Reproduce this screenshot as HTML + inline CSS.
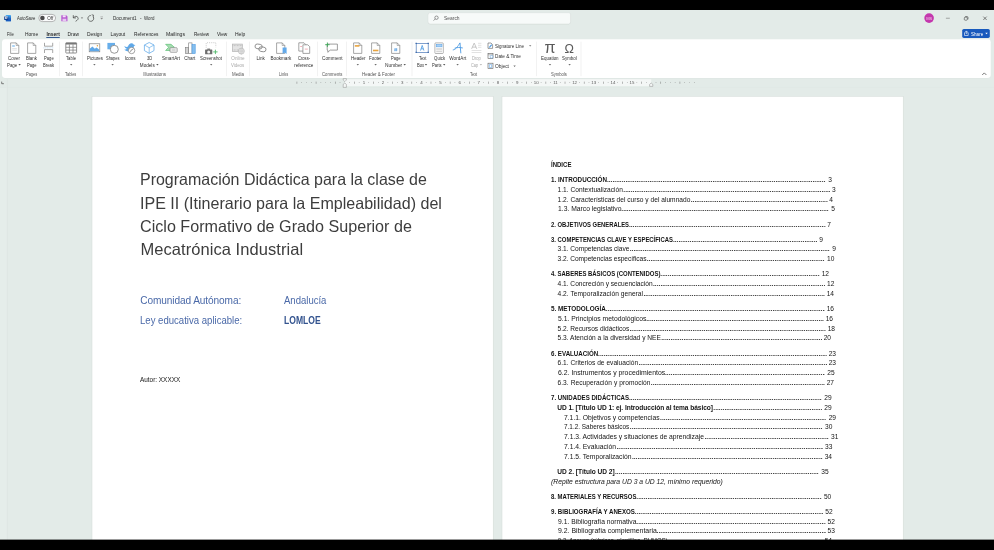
<!DOCTYPE html>
<html lang="es"><head><meta charset="utf-8"><title>Document1 - Word</title>
<style>
html,body{margin:0;padding:0;background:#000;}
body{width:994px;height:550px;position:relative;overflow:hidden;font-family:"Liberation Sans", sans-serif;}
.t{position:absolute;white-space:pre;display:block;transform-origin:0 0;}
.a{position:absolute;}
svg{position:absolute;overflow:visible;}
svg.f{left:0;top:0;}
#w{position:absolute;left:0;top:0;width:994px;height:550px;overflow:hidden;will-change:transform;}
</style></head><body>
<div id="w">
<svg class="f" width="994" height="550" viewBox="0 0 994 550"><rect x="0" y="10" width="994" height="530" rx="0" fill="#e3ebe8"/></svg>
<svg class="f" width="994" height="550" viewBox="0 0 994 550"><rect x="92" y="96.3" width="401.2" height="450" rx="0" fill="#fff" stroke="#d2d9d6" stroke-width="0.5"/></svg>
<svg class="f" width="994" height="550" viewBox="0 0 994 550"><rect x="502" y="96.3" width="401.2" height="450" rx="0" fill="#fff" stroke="#d2d9d6" stroke-width="0.5"/></svg>
<svg class="f" width="994" height="550" viewBox="0 0 994 550"><rect x="0" y="87.2" width="7.0" height="460" rx="0" fill="#e5edea"/></svg>
<svg class="f" width="994" height="550" viewBox="0 0 994 550"><rect x="6.9" y="79" width="0.6" height="468" rx="0" fill="#dbe3e0"/></svg>
<svg class="f" width="994" height="550" viewBox="0 0 994 550"><rect x="0" y="86.9" width="994" height="0.5" rx="0" fill="#dfe7e4"/></svg>
<svg class="f" width="994" height="550" viewBox="0 0 994 550"><g transform="translate(1.2 81.4)"><path d="M0.5 0.2 V2.3 H2.7" fill="none" stroke="#555" stroke-width="0.75"/></g></svg>
<svg class="f" width="994" height="550" viewBox="0 0 994 550"><g transform="translate(4.2 14.9)"><rect x="1.6" y="0" width="5.2" height="6.4" rx="0.7" fill="#41a5ee"/><rect x="1.6" y="3.2" width="5.2" height="3.2" fill="#185abd"/><rect x="1.6" y="1.6" width="5.2" height="1.6" fill="#2b7cd3"/><rect x="0" y="1.4" width="4" height="3.8" rx="0.5" fill="#103f91"/><text x="2" y="4.4" font-size="3" font-weight="700" fill="#fff" text-anchor="middle" font-family="Liberation Sans, sans-serif">W</text></g></svg>
<span class="t" id="t0" style="left:17.30px;top:17.00px;font-size:4.6px;line-height:4.6px;color:#2b2b2b;transform:scaleX(0.9186);">AutoSave</span>
<svg class="f" width="994" height="550" viewBox="0 0 994 550"><rect x="38.8" y="14.4" width="16.8" height="7.2" rx="3.6" fill="#fbfcfc" stroke="#8a8a8a" stroke-width="0.6"/></svg>
<svg class="f" width="994" height="550" viewBox="0 0 994 550"><rect x="40.1" y="15.7" width="4.6" height="4.6" rx="2.3" fill="#4a4a4a"/></svg>
<span class="t" id="t1" style="left:47.20px;top:17.00px;font-size:4.6px;line-height:4.6px;color:#333;letter-spacing:-0.016px;">Off</span>
<svg class="f" width="994" height="550" viewBox="0 0 994 550"><g transform="translate(61 15)"><path d="M0.3 0.3 H5.2 L6.5 1.6 V6.3 H0.3 Z" fill="#b75ad0"/><rect x="1.7" y="0.3" width="3.0" height="2.0" fill="#f3e3f8"/><rect x="1.5" y="3.7" width="3.8" height="2.6" fill="#e6c8f0"/></g></svg>
<svg class="f" width="994" height="550" viewBox="0 0 994 550"><g transform="translate(72.4 14.6)"><path d="M0.9 0.6 V3.3 H3.6" fill="none" stroke="#444" stroke-width="0.75"/><path d="M1.1 3.2 C2.2 1.4 4.6 1.2 5.5 2.8 C6.3 4.3 5.2 5.6 3.2 6.7" fill="none" stroke="#444" stroke-width="0.75"/></g></svg>
<svg class="f" width="994" height="550" viewBox="0 0 994 550"><g transform="translate(80.8 17.4)"><path d="M0 0 H2.4 L1.2 1.4 Z" fill="#666"/></g></svg>
<svg class="f" width="994" height="550" viewBox="0 0 994 550"><g transform="translate(87.2 14.6)"><path d="M3.6 0.9 A2.9 2.9 0 1 0 6.1 2.3" fill="none" stroke="#444" stroke-width="0.75"/><path d="M3.6 0.2 V2.2 H5.6" fill="none" stroke="#444" stroke-width="0" /><path d="M4.5 0.2 L6.3 0.5 L6.0 2.5" fill="none" stroke="#444" stroke-width="0.7"/></g></svg>
<svg class="f" width="994" height="550" viewBox="0 0 994 550"><g transform="translate(100.2 16.6)"><path d="M0.2 0.3 H2.8" stroke="#8a8a8a" stroke-width="0.55"/><path d="M0.2 1.3 H2.8 L1.5 2.8 Z" fill="#8a8a8a"/></g></svg>
<span class="t" id="t2" style="left:112.90px;top:17.00px;font-size:4.6px;line-height:4.6px;color:#2b2b2b;letter-spacing:0.033px;">Document1</span>
<span class="t" id="t3" style="left:139.93px;top:17.00px;font-size:4.6px;line-height:4.6px;color:#2b2b2b;">-</span>
<span class="t" id="t4" style="left:144.30px;top:17.00px;font-size:4.6px;line-height:4.6px;color:#2b2b2b;transform:scaleX(0.9628);">Word</span>
<svg class="f" width="994" height="550" viewBox="0 0 994 550"><rect x="428" y="13.0" width="142.6" height="11.3" rx="2" fill="#c9d2ce"/></svg>
<svg class="f" width="994" height="550" viewBox="0 0 994 550"><rect x="428" y="12.7" width="142.6" height="11.2" rx="2" fill="#f7faf9" stroke="#d3dbd8" stroke-width="0.4"/></svg>
<svg class="f" width="994" height="550" viewBox="0 0 994 550"><g transform="translate(433.2 15.6)"><circle cx="3.3" cy="2.1" r="1.7" fill="none" stroke="#555" stroke-width="0.6"/><path d="M2.1 3.3 L0.4 5" stroke="#555" stroke-width="0.6"/></g></svg>
<span class="t" id="t5" style="left:443.90px;top:17.00px;font-size:4.6px;line-height:4.6px;color:#555;transform:scaleX(1.0712);">Search</span>
<svg class="f" width="994" height="550" viewBox="0 0 994 550"><rect x="924.3" y="13.3" width="9.6" height="9.6" rx="4.8" fill="#c437ad"/></svg>
<span class="t" id="t6" style="left:926.13px;top:17.00px;font-size:4.1px;line-height:4.1px;color:#f0c6e6;">MS</span>
<svg class="f" width="994" height="550" viewBox="0 0 994 550"><rect x="945.9" y="17.85" width="3.9" height="0.55" rx="0" fill="#6a6a6a"/></svg>
<svg class="f" width="994" height="550" viewBox="0 0 994 550"><g transform="translate(964.0 16.2)"><rect x="0.3" y="1.0" width="3.0" height="3.0" rx="0.8" fill="none" stroke="#444" stroke-width="0.6"/><path d="M1.2 0.35 H3.1 Q4.0 0.35 4.0 1.3 V3.1" fill="none" stroke="#444" stroke-width="0.6"/></g></svg>
<svg class="f" width="994" height="550" viewBox="0 0 994 550"><g transform="translate(983.1 16.4)"><path d="M0.2 0.2 L3.6 3.6 M3.6 0.2 L0.2 3.6" stroke="#3a3a3a" stroke-width="0.6"/></g></svg>
<span class="t" id="t7" style="left:7.30px;top:33.00px;font-size:4.9px;line-height:4.9px;color:#262626;transform:scaleX(0.8491);">File</span>
<span class="t" id="t8" style="left:24.90px;top:33.00px;font-size:4.9px;line-height:4.9px;color:#262626;letter-spacing:0.063px;">Home</span>
<span class="t" id="t9" style="left:46.50px;top:33.00px;font-size:4.9px;line-height:4.9px;color:#262626;font-weight:700;letter-spacing:-0.005px;">Insert</span>
<span class="t" id="t10" style="left:67.40px;top:33.00px;font-size:4.9px;line-height:4.9px;color:#262626;letter-spacing:0.045px;">Draw</span>
<span class="t" id="t11" style="left:87.00px;top:33.00px;font-size:4.9px;line-height:4.9px;color:#262626;letter-spacing:0.011px;">Design</span>
<span class="t" id="t12" style="left:110.60px;top:33.00px;font-size:4.9px;line-height:4.9px;color:#262626;letter-spacing:-0.015px;">Layout</span>
<span class="t" id="t13" style="left:133.50px;top:33.00px;font-size:4.9px;line-height:4.9px;color:#262626;transform:scaleX(0.9794);">References</span>
<span class="t" id="t14" style="left:166.00px;top:33.00px;font-size:4.9px;line-height:4.9px;color:#262626;transform:scaleX(1.0583);">Mailings</span>
<span class="t" id="t15" style="left:193.60px;top:33.00px;font-size:4.9px;line-height:4.9px;color:#262626;transform:scaleX(0.9472);">Review</span>
<span class="t" id="t16" style="left:216.80px;top:33.00px;font-size:4.9px;line-height:4.9px;color:#262626;transform:scaleX(0.9795);">View</span>
<span class="t" id="t17" style="left:235.10px;top:33.00px;font-size:4.9px;line-height:4.9px;color:#262626;transform:scaleX(1.0236);">Help</span>
<svg class="f" width="994" height="550" viewBox="0 0 994 550"><rect x="46.1" y="37.05" width="13.8" height="0.95" rx="0.4" fill="#34588f"/></svg>
<svg class="f" width="994" height="550" viewBox="0 0 994 550"><rect x="962.2" y="28.9" width="27.6" height="9.0" rx="1.6" fill="#185abd"/></svg>
<svg class="f" width="994" height="550" viewBox="0 0 994 550"><g transform="translate(964.0 30.5)"><path d="M1.6 2.2 H0.5 V5 H4.2 V2.2 H3.2" fill="none" stroke="#fff" stroke-width="0.6"/><path d="M2.4 3.6 V0.6 M1.3 1.5 L2.4 0.4 L3.5 1.5" fill="none" stroke="#fff" stroke-width="0.6"/></g></svg>
<span class="t" id="t18" style="left:970.60px;top:32.00px;font-size:5.0px;line-height:5.0px;color:#fff;transform:scaleX(0.9143);">Share</span>
<svg class="f" width="994" height="550" viewBox="0 0 994 550"><g transform="translate(985.3 32.8)"><path d="M0 0 L1.25 1.4 L2.5 0 Z" fill="#fff"/></g></svg>
<svg class="f" width="994" height="550" viewBox="0 0 994 550"><rect x="2" y="39.4" width="988.8" height="38.9" rx="3" fill="rgba(0,0,0,0.05)"/></svg>
<svg class="f" width="994" height="550" viewBox="0 0 994 550"><rect x="2" y="39.3" width="988.8" height="38.6" rx="3" fill="#fff"/></svg>
<svg class="f" width="994" height="550" viewBox="0 0 994 550"><g transform="translate(10.2 42.5)"><path d="M0.4 0.4 H6.0 L8.6 3.0 V10.9 H0.4 Z" fill="#fff" stroke="#767676" stroke-width="0.64"/><path d="M6.0 0.4 V3.0 H8.6" fill="none" stroke="#767676" stroke-width="0.512"/><rect x="2" y="2.6" width="2.6" height="1.8" fill="#8cc2f0" opacity="0.8"/><path d="M2 6 H6.6 M2 7.6 H6.6" stroke="#c8c8c8" stroke-width="0.5"/></g></svg>
<span class="t" id="t19" style="left:8.15px;top:57.00px;font-size:4.6px;line-height:4.6px;color:#2f2f2f;transform:scaleX(0.9702);">Cover</span>
<span class="t" id="t20" style="left:7.20px;top:64.00px;font-size:4.6px;line-height:4.6px;color:#2f2f2f;transform:scaleX(0.9502);">Page</span>
<svg class="f" width="994" height="550" viewBox="0 0 994 550"><g transform="translate(18.400000000000002 64.05)"><path d="M0 0 H2.4 L1.2 1.35 Z" fill="#555"/></g></svg>
<svg class="f" width="994" height="550" viewBox="0 0 994 550"><g transform="translate(27.2 42.5)"><path d="M0.4 0.4 H6.0 L8.6 3.0 V10.9 H0.4 Z" fill="#fff" stroke="#767676" stroke-width="0.64"/><path d="M6.0 0.4 V3.0 H8.6" fill="none" stroke="#767676" stroke-width="0.512"/></g></svg>
<span class="t" id="t21" style="left:25.85px;top:57.00px;font-size:4.6px;line-height:4.6px;color:#2f2f2f;transform:scaleX(0.9478);">Blank</span>
<span class="t" id="t22" style="left:26.95px;top:64.00px;font-size:4.6px;line-height:4.6px;color:#2f2f2f;transform:scaleX(0.8850);">Page</span>
<svg class="f" width="994" height="550" viewBox="0 0 994 550"><g transform="translate(43.2 42.5)"><path d="M1.3 0.3 V3.7 H9.5 V0.3 M1.3 10.5 V7.1 H9.5 V10.5" fill="none" stroke="#767676" stroke-width="0.64"/><path d="M0.2 5.4 H10.6" stroke="#bcd9f1" stroke-width="0.8" stroke-dasharray="1.2 0.5"/></g></svg>
<span class="t" id="t23" style="left:43.75px;top:57.00px;font-size:4.6px;line-height:4.6px;color:#2f2f2f;transform:scaleX(0.9036);">Page</span>
<span class="t" id="t24" style="left:43.10px;top:64.00px;font-size:4.6px;line-height:4.6px;color:#2f2f2f;transform:scaleX(0.9155);">Break</span>
<span class="t" id="t25" style="left:25.75px;top:73.00px;font-size:4.6px;line-height:4.6px;color:#555;transform:scaleX(0.8671);">Pages</span>
<svg class="f" width="994" height="550" viewBox="0 0 994 550"><rect x="59.15" y="41.6" width="0.5" height="34.6" rx="0" fill="#e4e4e4"/></svg>
<svg class="f" width="994" height="550" viewBox="0 0 994 550"><g transform="translate(65.4 42.4)"><rect x="0.4" y="0.4" width="10.8" height="10.2" rx="0.5" fill="#fff" stroke="#777" stroke-width="0.8"/><rect x="0.4" y="0.4" width="10.8" height="1.7" fill="#777"/><path d="M4 2 V10.6 M7.6 2 V10.6 M0.4 4.9 H11.2 M0.4 7.7 H11.2" stroke="#7d7d7d" stroke-width="0.75"/></g></svg>
<span class="t" id="t26" style="left:66.40px;top:57.00px;font-size:4.6px;line-height:4.6px;color:#2f2f2f;transform:scaleX(0.9104);">Table</span>
<svg class="f" width="994" height="550" viewBox="0 0 994 550"><g transform="translate(70.0 64.05)"><path d="M0 0 H2.4 L1.2 1.35 Z" fill="#6e6e6e"/></g></svg>
<span class="t" id="t27" style="left:65.35px;top:73.00px;font-size:4.6px;line-height:4.6px;color:#555;transform:scaleX(0.8508);">Tables</span>
<svg class="f" width="994" height="550" viewBox="0 0 994 550"><rect x="82.15" y="41.6" width="0.5" height="34.6" rx="0" fill="#e4e4e4"/></svg>
<svg class="f" width="994" height="550" viewBox="0 0 994 550"><g transform="translate(88.8 43.4)"><rect x="0.4" y="0.4" width="10.6" height="8" fill="#fff" stroke="#767676" stroke-width="0.64"/><path d="M0.9 7.9 V5.4 L3.6 3 L6 5.4 L7.8 4.2 L10.5 6.4 V7.9 Z" fill="#5fa8e8"/><circle cx="8.6" cy="2.4" r="0.75" fill="#e8a33d"/></g></svg>
<span class="t" id="t28" style="left:86.50px;top:57.00px;font-size:4.6px;line-height:4.6px;color:#2f2f2f;transform:scaleX(0.9633);">Pictures</span>
<svg class="f" width="994" height="550" viewBox="0 0 994 550"><g transform="translate(93.2 64.05)"><path d="M0 0 H2.4 L1.2 1.35 Z" fill="#6e6e6e"/></g></svg>
<svg class="f" width="994" height="550" viewBox="0 0 994 550"><g transform="translate(107.2 42.8)"><rect x="0.2" y="0.1" width="7.6" height="6.4" fill="#68aeea"/><circle cx="7.1" cy="6.5" r="4.0" fill="#fff" stroke="#757575" stroke-width="0.75"/></g></svg>
<span class="t" id="t29" style="left:105.95px;top:57.00px;font-size:4.6px;line-height:4.6px;color:#2f2f2f;transform:scaleX(0.8657);">Shapes</span>
<svg class="f" width="994" height="550" viewBox="0 0 994 550"><g transform="translate(111.39999999999999 64.05)"><path d="M0 0 H2.4 L1.2 1.35 Z" fill="#6e6e6e"/></g></svg>
<svg class="f" width="994" height="550" viewBox="0 0 994 550"><g transform="translate(124 42.6)"><path d="M0.4 3.4 C1.8 4.6 3 4.6 4 4 C4.4 2 6 0.4 7.9 0.6 C8.9 0.7 9.5 1.5 9.7 2.1 L11.4 2.5 L9.9 3.6 C9.9 6 8.4 8.4 5.2 8.8 C3 9 1.2 8.2 0.2 7 C1.4 7.2 2.4 6.8 3 6.2 C1.6 5.8 0.6 4.8 0.4 3.4 Z" fill="#5fa8e8"/><circle cx="7.6" cy="7.9" r="3.2" fill="#fff" stroke="#757575" stroke-width="0.65"/><path d="M5.6 9.9 L9.6 5.9 M6.6 8.9 C6.4 7.6 7.6 6.6 8.9 6.7" stroke="#757575" stroke-width="0.5" fill="none"/></g></svg>
<span class="t" id="t30" style="left:124.80px;top:57.00px;font-size:4.6px;line-height:4.6px;color:#2f2f2f;letter-spacing:-0.037px;">Icons</span>
<svg class="f" width="994" height="550" viewBox="0 0 994 550"><g transform="translate(143.9 42.1)"><path d="M5.3 0.4 L10.1 2.9 V8.5 L5.3 11.2 L0.5 8.5 V2.9 Z" fill="#fff" stroke="#5fa8e8" stroke-width="0.75"/><path d="M0.5 2.9 L5.3 5.6 L10.1 2.9 M5.3 5.6 V11.2" fill="none" stroke="#5fa8e8" stroke-width="0.65"/></g></svg>
<span class="t" id="t31" style="left:146.75px;top:57.00px;font-size:4.6px;line-height:4.6px;color:#2f2f2f;transform:scaleX(0.8681);">3D</span>
<span class="t" id="t32" style="left:139.80px;top:64.00px;font-size:4.6px;line-height:4.6px;color:#2f2f2f;letter-spacing:0.015px;">Models</span>
<svg class="f" width="994" height="550" viewBox="0 0 994 550"><g transform="translate(156.20000000000002 64.05)"><path d="M0 0 H2.4 L1.2 1.35 Z" fill="#555"/></g></svg>
<svg class="f" width="994" height="550" viewBox="0 0 994 550"><g transform="translate(165.2 43.9)"><path d="M0.4 0.4 H5.8 L9.2 3.4 L5.8 6.6 H0.4 L3.4 3.4 Z" fill="#a5ddb0" stroke="#4db868" stroke-width="0.6"/><rect x="4.8" y="3.8" width="7.2" height="4.6" rx="0.8" fill="#ececec" stroke="#7a7a7a" stroke-width="0.6"/><rect x="6.6" y="5.2" width="3.6" height="1.8" fill="#d4d4d4"/></g></svg>
<span class="t" id="t33" style="left:162.00px;top:57.00px;font-size:4.6px;line-height:4.6px;color:#2f2f2f;letter-spacing:-0.016px;">SmartArt</span>
<svg class="f" width="994" height="550" viewBox="0 0 994 550"><g transform="translate(185.2 42.6)"><rect x="0.3" y="5.1" width="3.2" height="5.8" fill="#d2d2d2" stroke="#7a7a7a" stroke-width="0.6"/><rect x="3.5" y="0.3" width="3.3" height="10.6" fill="#fff" stroke="#7a7a7a" stroke-width="0.6"/><rect x="6.8" y="2" width="3.2" height="8.9" fill="#86bfee" stroke="#4a98e2" stroke-width="0.6"/></g></svg>
<span class="t" id="t34" style="left:184.25px;top:57.00px;font-size:4.6px;line-height:4.6px;color:#2f2f2f;letter-spacing:-0.027px;">Chart</span>
<svg class="f" width="994" height="550" viewBox="0 0 994 550"><g transform="translate(204.8 42.1)"><path d="M1.4 5.4 V0.6 H11 V5.4" fill="none" stroke="#a0a0a0" stroke-width="0.7" stroke-dasharray="0.7 1.2"/><rect x="0.3" y="7.4" width="7.2" height="4.8" rx="0.5" fill="#6d6d6d"/><rect x="2.5" y="6.5" width="2.8" height="1.2" fill="#6d6d6d"/><circle cx="3.9" cy="9.8" r="1.5" fill="#f4f4f4"/><path d="M10.6 7.6 V12 M8.4 9.8 H12.8" stroke="#4db868" stroke-width="0.9"/></g></svg>
<span class="t" id="t35" style="left:200.20px;top:57.00px;font-size:4.6px;line-height:4.6px;color:#2f2f2f;transform:scaleX(0.9462);">Screenshot</span>
<svg class="f" width="994" height="550" viewBox="0 0 994 550"><g transform="translate(210.0 64.05)"><path d="M0 0 H2.4 L1.2 1.35 Z" fill="#6e6e6e"/></g></svg>
<span class="t" id="t36" style="left:143.20px;top:73.00px;font-size:4.6px;line-height:4.6px;color:#555;letter-spacing:-0.033px;">Illustrations</span>
<svg class="f" width="994" height="550" viewBox="0 0 994 550"><rect x="226.35" y="41.6" width="0.5" height="34.6" rx="0" fill="#e4e4e4"/></svg>
<svg class="f" width="994" height="550" viewBox="0 0 994 550"><g transform="translate(232.1 43.7)"><rect x="0.4" y="0.4" width="9.8" height="7.4" fill="#e4e4e4" stroke="#b4b4b4" stroke-width="0.7"/><path d="M0.4 1.9 H10.2 M0.4 6.3 H10.2" stroke="#b9b9b9" stroke-width="0.9" stroke-dasharray="0.8 0.7"/><circle cx="9.2" cy="7.4" r="3.0" fill="#ececec" stroke="#b4b4b4" stroke-width="0.65"/><path d="M6.2 7.4 H12.2 M9.2 4.4 V10.4" stroke="#bdbdbd" stroke-width="0.45"/><ellipse cx="9.2" cy="7.4" rx="1.3" ry="3" fill="none" stroke="#bdbdbd" stroke-width="0.4"/></g></svg>
<span class="t" id="t37" style="left:231.35px;top:57.00px;font-size:4.6px;line-height:4.6px;color:#a9a9a9;letter-spacing:-0.030px;">Online</span>
<span class="t" id="t38" style="left:231.35px;top:64.00px;font-size:4.6px;line-height:4.6px;color:#a9a9a9;transform:scaleX(0.9378);">Videos</span>
<span class="t" id="t39" style="left:232.10px;top:73.00px;font-size:4.6px;line-height:4.6px;color:#555;transform:scaleX(0.9588);">Media</span>
<svg class="f" width="994" height="550" viewBox="0 0 994 550"><rect x="249.25" y="41.6" width="0.5" height="34.6" rx="0" fill="#e4e4e4"/></svg>
<svg class="f" width="994" height="550" viewBox="0 0 994 550"><g transform="translate(254.6 43.8)"><rect x="0.4" y="0.4" width="7.2" height="4.6" rx="2.3" fill="none" stroke="#767676" stroke-width="0.75" transform="rotate(8 4 2.7)"/><rect x="4.2" y="3.2" width="7.2" height="4.6" rx="2.3" fill="none" stroke="#767676" stroke-width="0.75" transform="rotate(8 7.8 5.5)"/></g></svg>
<span class="t" id="t40" style="left:256.45px;top:57.00px;font-size:4.6px;line-height:4.6px;color:#2f2f2f;letter-spacing:-0.034px;">Link</span>
<svg class="f" width="994" height="550" viewBox="0 0 994 550"><g transform="translate(276.2 42.5)"><path d="M0.4 0.4 H6.0 L8.6 3.0 V10.9 H0.4 Z" fill="#fff" stroke="#767676" stroke-width="0.64"/><path d="M6.0 0.4 V3.0 H8.6" fill="none" stroke="#767676" stroke-width="0.512"/><path d="M6.4 5.1 H10.4 V11.4 L8.4 9.9 L6.4 11.4 Z" fill="#62a9ea"/></g></svg>
<span class="t" id="t41" style="left:270.50px;top:57.00px;font-size:4.6px;line-height:4.6px;color:#2f2f2f;letter-spacing:0.014px;">Bookmark</span>
<svg class="f" width="994" height="550" viewBox="0 0 994 550"><g transform="translate(298.6 42.5)"><path d="M0.2 0.3 H5.4 L7.4 2.3 V8.6 H0.2 Z" fill="#fff" stroke="#767676" stroke-width="0.65"/><path d="M4.3 2.3 H9.2 L11.1 4.2 V10.9 H4.3 Z" fill="#fff" stroke="#767676" stroke-width="0.65"/><path d="M1.6 4.0 H3.4 M6.2 6.6 H9.2" stroke="#ec8f9c" stroke-width="0.7"/></g></svg>
<span class="t" id="t42" style="left:297.55px;top:57.00px;font-size:4.6px;line-height:4.6px;color:#2f2f2f;transform:scaleX(0.8942);">Cross-</span>
<span class="t" id="t43" style="left:294.25px;top:64.00px;font-size:4.6px;line-height:4.6px;color:#2f2f2f;letter-spacing:-0.036px;">reference</span>
<span class="t" id="t44" style="left:278.50px;top:73.00px;font-size:4.6px;line-height:4.6px;color:#555;transform:scaleX(0.8571);">Links</span>
<svg class="f" width="994" height="550" viewBox="0 0 994 550"><rect x="317.45" y="41.6" width="0.5" height="34.6" rx="0" fill="#e4e4e4"/></svg>
<svg class="f" width="994" height="550" viewBox="0 0 994 550"><g transform="translate(325.2 42.5)"><path d="M2 1.6 H12.2 V7.6 H5 L2.6 9.8 V7.6 H2 Z" fill="#fff" stroke="#767676" stroke-width="0.7"/><path d="M2.2 0 V4.4 M0 2.2 H4.4" stroke="#3aa655" stroke-width="0.9"/></g></svg>
<span class="t" id="t45" style="left:321.55px;top:57.00px;font-size:4.6px;line-height:4.6px;color:#2f2f2f;transform:scaleX(1.0290);">Comment</span>
<span class="t" id="t46" style="left:321.55px;top:73.00px;font-size:4.6px;line-height:4.6px;color:#555;transform:scaleX(0.9226);">Comments</span>
<svg class="f" width="994" height="550" viewBox="0 0 994 550"><rect x="346.15" y="41.6" width="0.5" height="34.6" rx="0" fill="#e4e4e4"/></svg>
<svg class="f" width="994" height="550" viewBox="0 0 994 550"><g transform="translate(353.2 42.5)"><path d="M0.4 0.4 H6.0 L8.6 3.0 V10.9 H0.4 Z" fill="#fff" stroke="#767676" stroke-width="0.64"/><path d="M6.0 0.4 V3.0 H8.6" fill="none" stroke="#767676" stroke-width="0.512"/><rect x="1.6" y="2.6" width="4.6" height="1.6" fill="#e8a33d"/></g></svg>
<span class="t" id="t47" style="left:350.65px;top:57.00px;font-size:4.6px;line-height:4.6px;color:#2f2f2f;transform:scaleX(0.9617);">Header</span>
<svg class="f" width="994" height="550" viewBox="0 0 994 550"><g transform="translate(356.6 64.05)"><path d="M0 0 H2.4 L1.2 1.35 Z" fill="#6e6e6e"/></g></svg>
<svg class="f" width="994" height="550" viewBox="0 0 994 550"><g transform="translate(371.2 42.5)"><path d="M0.4 0.4 H6.0 L8.6 3.0 V10.9 H0.4 Z" fill="#fff" stroke="#767676" stroke-width="0.64"/><path d="M6.0 0.4 V3.0 H8.6" fill="none" stroke="#767676" stroke-width="0.512"/><rect x="1.8" y="7.2" width="5.4" height="1.6" fill="#e8a33d"/></g></svg>
<span class="t" id="t48" style="left:369.30px;top:57.00px;font-size:4.6px;line-height:4.6px;color:#2f2f2f;transform:scaleX(0.9638);">Footer</span>
<svg class="f" width="994" height="550" viewBox="0 0 994 550"><g transform="translate(374.40000000000003 64.05)"><path d="M0 0 H2.4 L1.2 1.35 Z" fill="#6e6e6e"/></g></svg>
<svg class="f" width="994" height="550" viewBox="0 0 994 550"><g transform="translate(391.2 42.5)"><path d="M0.4 0.4 H6.0 L8.6 3.0 V10.9 H0.4 Z" fill="#fff" stroke="#767676" stroke-width="0.64"/><path d="M6.0 0.4 V3.0 H8.6" fill="none" stroke="#767676" stroke-width="0.512"/><path d="M4.0 5.6 L3.7 8.8 M5.4 5.6 L5.1 8.8 M3.0 6.6 H6.2 M2.9 7.8 H6.1" stroke="#4a98e2" stroke-width="0.55"/></g></svg>
<span class="t" id="t49" style="left:391.30px;top:57.00px;font-size:4.6px;line-height:4.6px;color:#2f2f2f;transform:scaleX(0.8757);">Page</span>
<span class="t" id="t50" style="left:385.20px;top:64.00px;font-size:4.6px;line-height:4.6px;color:#2f2f2f;transform:scaleX(1.0524);">Number</span>
<svg class="f" width="994" height="550" viewBox="0 0 994 550"><g transform="translate(403.5 64.05)"><path d="M0 0 H2.4 L1.2 1.35 Z" fill="#555"/></g></svg>
<span class="t" id="t51" style="left:362.25px;top:73.00px;font-size:4.6px;line-height:4.6px;color:#555;transform:scaleX(0.9685);">Header &amp; Footer</span>
<svg class="f" width="994" height="550" viewBox="0 0 994 550"><rect x="411.75" y="41.6" width="0.5" height="34.6" rx="0" fill="#e4e4e4"/></svg>
<svg class="f" width="994" height="550" viewBox="0 0 994 550"><g transform="translate(415.8 43.0)"><rect x="0.4" y="0.4" width="12" height="9" fill="#fff" stroke="#4a78b8" stroke-width="0.7"/><path d="M4.7 7.6 L6.4 2.4 L8.1 7.6 M5.3 5.8 H7.5" fill="none" stroke="#4a98e2" stroke-width="0.8"/><path d="M0.4 0.4 h0.01 M12.4 0.4 h0.01 M0.4 9.4 h0.01 M12.4 9.4 h0.01" stroke="#3c69a8" stroke-width="1.3" stroke-linecap="square"/></g></svg>
<span class="t" id="t52" style="left:418.50px;top:57.00px;font-size:4.6px;line-height:4.6px;color:#2f2f2f;transform:scaleX(0.8770);">Text</span>
<span class="t" id="t53" style="left:416.50px;top:64.00px;font-size:4.6px;line-height:4.6px;color:#2f2f2f;transform:scaleX(0.9089);">Box</span>
<svg class="f" width="994" height="550" viewBox="0 0 994 550"><g transform="translate(424.8 64.05)"><path d="M0 0 H2.4 L1.2 1.35 Z" fill="#555"/></g></svg>
<svg class="f" width="994" height="550" viewBox="0 0 994 550"><g transform="translate(434.6 42.6)"><rect x="0.3" y="0.3" width="8.4" height="10.6" rx="0.8" fill="#fff" stroke="#858585" stroke-width="0.6"/><rect x="1.6" y="1.7" width="5.8" height="2.6" fill="#a9d1f4" stroke="#4a98e2" stroke-width="0.45"/><rect x="1.6" y="5.6" width="5.8" height="1.6" fill="#d6d6d6"/><rect x="1.6" y="8" width="5.8" height="1.6" fill="#d6d6d6"/></g></svg>
<span class="t" id="t54" style="left:433.65px;top:57.00px;font-size:4.6px;line-height:4.6px;color:#2f2f2f;transform:scaleX(0.9447);">Quick</span>
<span class="t" id="t55" style="left:432.10px;top:64.00px;font-size:4.6px;line-height:4.6px;color:#2f2f2f;transform:scaleX(0.8943);">Parts</span>
<svg class="f" width="994" height="550" viewBox="0 0 994 550"><g transform="translate(443.0 64.05)"><path d="M0 0 H2.4 L1.2 1.35 Z" fill="#555"/></g></svg>
<svg class="f" width="994" height="550" viewBox="0 0 994 550"><g transform="translate(452.6 42.3)"><path d="M0.6 7.6 C3 7.4 5 4.4 7.4 0.6 C7.8 4 7.8 7.4 8.2 10.6 M2.4 5.8 C4.6 5 7 5 9.8 5.6" fill="none" stroke="#4a98e2" stroke-width="0.9" stroke-linecap="round"/></g></svg>
<span class="t" id="t56" style="left:449.35px;top:57.00px;font-size:4.6px;line-height:4.6px;color:#2f2f2f;letter-spacing:0.019px;">WordArt</span>
<svg class="f" width="994" height="550" viewBox="0 0 994 550"><g transform="translate(456.40000000000003 64.05)"><path d="M0 0 H2.4 L1.2 1.35 Z" fill="#6e6e6e"/></g></svg>
<svg class="f" width="994" height="550" viewBox="0 0 994 550"><g transform="translate(471 42.5)"><path d="M0.6 6.4 L3.2 0.6 L5.8 6.4 M1.4 4.6 H5" fill="none" stroke="#b9b9b9" stroke-width="0.8"/><path d="M7 0.8 H10.4 M7 2.8 H10.4 M7 4.8 H10.4 M0.6 8 H10.4 M0.6 10 H10.4" stroke="#cfcfcf" stroke-width="0.6"/></g></svg>
<span class="t" id="t57" style="left:472.30px;top:57.00px;font-size:4.6px;line-height:4.6px;color:#a9a9a9;transform:scaleX(0.8828);">Drop</span>
<span class="t" id="t58" style="left:471.30px;top:64.00px;font-size:4.6px;line-height:4.6px;color:#a9a9a9;transform:scaleX(0.8652);">Cap</span>
<svg class="f" width="994" height="550" viewBox="0 0 994 550"><g transform="translate(479.7 64.05)"><path d="M0 0 H2.4 L1.2 1.35 Z" fill="#bbb"/></g></svg>
<svg class="f" width="994" height="550" viewBox="0 0 994 550"><g transform="translate(487.6 42.6)"><path d="M0.4 0.4 H3.4 L5 2 V5.8 H0.4 Z" fill="#fff" stroke="#5c5c5c" stroke-width="0.6"/><path d="M1.2 4.6 L3.6 1.6 L4.6 2.4 L2.2 5.2 Z" fill="#4a98e2"/></g></svg>
<span class="t" id="t59" style="left:494.90px;top:45.00px;font-size:4.6px;line-height:4.6px;color:#2f2f2f;transform:scaleX(0.9784);">Signature Line</span>
<svg class="f" width="994" height="550" viewBox="0 0 994 550"><g transform="translate(529.0 45.15)"><path d="M0 0 H2.4 L1.2 1.35 Z" fill="#6e6e6e"/></g></svg>
<svg class="f" width="994" height="550" viewBox="0 0 994 550"><g transform="translate(487.6 52.6)"><rect x="0.4" y="0.8" width="5" height="5" fill="#fff" stroke="#5c5c5c" stroke-width="0.6"/><path d="M0.4 2.2 H5.4" stroke="#767676" stroke-width="0.5"/><circle cx="3.9" cy="4.2" r="1.4" fill="#fff" stroke="#4a98e2" stroke-width="0.5"/></g></svg>
<span class="t" id="t60" style="left:494.90px;top:55.00px;font-size:4.6px;line-height:4.6px;color:#2f2f2f;transform:scaleX(1.0205);">Date &amp; Time</span>
<svg class="f" width="994" height="550" viewBox="0 0 994 550"><g transform="translate(487.6 62.8)"><rect x="0.4" y="0.4" width="5" height="5.4" fill="#fff" stroke="#5c5c5c" stroke-width="0.6"/><rect x="1.6" y="2" width="2.6" height="2.6" fill="#fff" stroke="#4a98e2" stroke-width="0.5"/></g></svg>
<span class="t" id="t61" style="left:494.90px;top:65.00px;font-size:4.6px;line-height:4.6px;color:#2f2f2f;transform:scaleX(1.0466);">Object</span>
<svg class="f" width="994" height="550" viewBox="0 0 994 550"><g transform="translate(513.4 65.55)"><path d="M0 0 H2.4 L1.2 1.35 Z" fill="#6e6e6e"/></g></svg>
<span class="t" id="t62" style="left:470.40px;top:73.00px;font-size:4.6px;line-height:4.6px;color:#555;transform:scaleX(0.8533);">Text</span>
<svg class="f" width="994" height="550" viewBox="0 0 994 550"><rect x="536.25" y="41.6" width="0.5" height="34.6" rx="0" fill="#e4e4e4"/></svg>
<span class="t" id="t63" style="left:544.58px;top:40.00px;font-size:16px;line-height:16px;color:#5a5a5a;font-family:"DejaVu Sans Light","DejaVu Sans",sans-serif;font-weight:200;">π</span>
<span class="t" id="t64" style="left:541.30px;top:57.00px;font-size:4.6px;line-height:4.6px;color:#2f2f2f;transform:scaleX(0.9702);">Equation</span>
<svg class="f" width="994" height="550" viewBox="0 0 994 550"><g transform="translate(548.8 64.05)"><path d="M0 0 H2.4 L1.2 1.35 Z" fill="#6e6e6e"/></g></svg>
<span class="t" id="t65" style="left:564.59px;top:43.00px;font-size:12.6px;line-height:12.6px;color:#5a5a5a;font-family:"DejaVu Sans Light","DejaVu Sans",sans-serif;font-weight:200;">Ω</span>
<span class="t" id="t66" style="left:562.35px;top:57.00px;font-size:4.6px;line-height:4.6px;color:#2f2f2f;transform:scaleX(0.9590);">Symbol</span>
<svg class="f" width="994" height="550" viewBox="0 0 994 550"><g transform="translate(568.4 64.05)"><path d="M0 0 H2.4 L1.2 1.35 Z" fill="#6e6e6e"/></g></svg>
<span class="t" id="t67" style="left:551.25px;top:73.00px;font-size:4.6px;line-height:4.6px;color:#555;transform:scaleX(0.9021);">Symbols</span>
<svg class="f" width="994" height="550" viewBox="0 0 994 550"><rect x="580.75" y="41.6" width="0.5" height="34.6" rx="0" fill="#e4e4e4"/></svg>
<svg class="f" width="994" height="550" viewBox="0 0 994 550"><g transform="translate(981.8 72.4)"><path d="M0.4 2.6 L2.5 0.5 L4.6 2.6" fill="none" stroke="#444" stroke-width="0.7"/></g></svg>
<svg class="f" width="994" height="550" viewBox="0 0 994 550"><rect x="344.8" y="79.2" width="306.4" height="7.0" rx="0" fill="#f4f7f6"/></svg>
<span class="t" id="t68" style="left:362.72px;top:81.00px;font-size:4.4px;line-height:4.4px;color:#5a5a5a;">1</span>
<span class="t" id="t69" style="left:381.87px;top:81.00px;font-size:4.4px;line-height:4.4px;color:#5a5a5a;">2</span>
<span class="t" id="t70" style="left:401.02px;top:81.00px;font-size:4.4px;line-height:4.4px;color:#5a5a5a;">3</span>
<span class="t" id="t71" style="left:420.17px;top:81.00px;font-size:4.4px;line-height:4.4px;color:#5a5a5a;">4</span>
<span class="t" id="t72" style="left:439.32px;top:81.00px;font-size:4.4px;line-height:4.4px;color:#5a5a5a;">5</span>
<span class="t" id="t73" style="left:458.47px;top:81.00px;font-size:4.4px;line-height:4.4px;color:#5a5a5a;">6</span>
<span class="t" id="t74" style="left:477.62px;top:81.00px;font-size:4.4px;line-height:4.4px;color:#5a5a5a;">7</span>
<span class="t" id="t75" style="left:496.77px;top:81.00px;font-size:4.4px;line-height:4.4px;color:#5a5a5a;">8</span>
<span class="t" id="t76" style="left:515.92px;top:81.00px;font-size:4.4px;line-height:4.4px;color:#5a5a5a;">9</span>
<span class="t" id="t77" style="left:533.85px;top:81.00px;font-size:4.4px;line-height:4.4px;color:#5a5a5a;">10</span>
<span class="t" id="t78" style="left:553.17px;top:81.00px;font-size:4.4px;line-height:4.4px;color:#5a5a5a;">11</span>
<span class="t" id="t79" style="left:572.15px;top:81.00px;font-size:4.4px;line-height:4.4px;color:#5a5a5a;">12</span>
<span class="t" id="t80" style="left:591.30px;top:81.00px;font-size:4.4px;line-height:4.4px;color:#5a5a5a;">13</span>
<span class="t" id="t81" style="left:610.45px;top:81.00px;font-size:4.4px;line-height:4.4px;color:#5a5a5a;">14</span>
<span class="t" id="t82" style="left:629.60px;top:81.00px;font-size:4.4px;line-height:4.4px;color:#5a5a5a;">15</span>
<svg class="f" width="994" height="100" viewBox="0 0 994 100"><rect x="296.68" y="81.60" width="0.5" height="2.2" fill="#777"/><rect x="301.41" y="82.40" width="0.6" height="0.6" fill="#777"/><rect x="306.20" y="82.40" width="0.6" height="0.6" fill="#888"/><rect x="310.99" y="82.40" width="0.6" height="0.6" fill="#777"/><rect x="315.82" y="81.60" width="0.5" height="2.2" fill="#777"/><rect x="320.56" y="82.40" width="0.6" height="0.6" fill="#777"/><rect x="325.35" y="82.40" width="0.6" height="0.6" fill="#888"/><rect x="330.14" y="82.40" width="0.6" height="0.6" fill="#777"/><rect x="334.98" y="81.60" width="0.5" height="2.2" fill="#777"/><rect x="339.71" y="82.40" width="0.6" height="0.6" fill="#777"/><rect x="349.29" y="82.40" width="0.6" height="0.6" fill="#777"/><rect x="354.12" y="81.60" width="0.5" height="2.2" fill="#777"/><rect x="358.86" y="82.40" width="0.6" height="0.6" fill="#777"/><rect x="368.44" y="82.40" width="0.6" height="0.6" fill="#777"/><rect x="373.28" y="81.60" width="0.5" height="2.2" fill="#777"/><rect x="378.01" y="82.40" width="0.6" height="0.6" fill="#777"/><rect x="387.59" y="82.40" width="0.6" height="0.6" fill="#777"/><rect x="392.43" y="81.60" width="0.5" height="2.2" fill="#777"/><rect x="397.16" y="82.40" width="0.6" height="0.6" fill="#777"/><rect x="406.74" y="82.40" width="0.6" height="0.6" fill="#777"/><rect x="411.57" y="81.60" width="0.5" height="2.2" fill="#777"/><rect x="416.31" y="82.40" width="0.6" height="0.6" fill="#777"/><rect x="425.89" y="82.40" width="0.6" height="0.6" fill="#777"/><rect x="430.73" y="81.60" width="0.5" height="2.2" fill="#777"/><rect x="435.46" y="82.40" width="0.6" height="0.6" fill="#777"/><rect x="445.04" y="82.40" width="0.6" height="0.6" fill="#777"/><rect x="449.88" y="81.60" width="0.5" height="2.2" fill="#777"/><rect x="454.61" y="82.40" width="0.6" height="0.6" fill="#777"/><rect x="464.19" y="82.40" width="0.6" height="0.6" fill="#777"/><rect x="469.02" y="81.60" width="0.5" height="2.2" fill="#777"/><rect x="473.76" y="82.40" width="0.6" height="0.6" fill="#777"/><rect x="483.34" y="82.40" width="0.6" height="0.6" fill="#777"/><rect x="488.18" y="81.60" width="0.5" height="2.2" fill="#777"/><rect x="492.91" y="82.40" width="0.6" height="0.6" fill="#777"/><rect x="502.49" y="82.40" width="0.6" height="0.6" fill="#777"/><rect x="507.32" y="81.60" width="0.5" height="2.2" fill="#777"/><rect x="512.06" y="82.40" width="0.6" height="0.6" fill="#777"/><rect x="521.64" y="82.40" width="0.6" height="0.6" fill="#777"/><rect x="526.48" y="81.60" width="0.5" height="2.2" fill="#777"/><rect x="531.21" y="82.40" width="0.6" height="0.6" fill="#777"/><rect x="540.79" y="82.40" width="0.6" height="0.6" fill="#777"/><rect x="545.62" y="81.60" width="0.5" height="2.2" fill="#777"/><rect x="550.36" y="82.40" width="0.6" height="0.6" fill="#777"/><rect x="559.94" y="82.40" width="0.6" height="0.6" fill="#777"/><rect x="564.77" y="81.60" width="0.5" height="2.2" fill="#777"/><rect x="569.51" y="82.40" width="0.6" height="0.6" fill="#777"/><rect x="579.09" y="82.40" width="0.6" height="0.6" fill="#777"/><rect x="583.92" y="81.60" width="0.5" height="2.2" fill="#777"/><rect x="588.66" y="82.40" width="0.6" height="0.6" fill="#777"/><rect x="598.24" y="82.40" width="0.6" height="0.6" fill="#777"/><rect x="603.08" y="81.60" width="0.5" height="2.2" fill="#777"/><rect x="607.81" y="82.40" width="0.6" height="0.6" fill="#777"/><rect x="617.39" y="82.40" width="0.6" height="0.6" fill="#777"/><rect x="622.22" y="81.60" width="0.5" height="2.2" fill="#777"/><rect x="626.96" y="82.40" width="0.6" height="0.6" fill="#777"/><rect x="636.54" y="82.40" width="0.6" height="0.6" fill="#777"/><rect x="641.38" y="81.60" width="0.5" height="2.2" fill="#777"/><rect x="646.11" y="82.40" width="0.6" height="0.6" fill="#777"/><rect x="655.69" y="82.40" width="0.6" height="0.6" fill="#777"/><rect x="660.52" y="81.60" width="0.5" height="2.2" fill="#777"/><rect x="665.26" y="82.40" width="0.6" height="0.6" fill="#777"/><rect x="670.05" y="82.40" width="0.6" height="0.6" fill="#888"/><rect x="674.84" y="82.40" width="0.6" height="0.6" fill="#777"/><rect x="679.67" y="81.60" width="0.5" height="2.2" fill="#777"/><rect x="684.41" y="82.40" width="0.6" height="0.6" fill="#777"/><rect x="689.20" y="82.40" width="0.6" height="0.6" fill="#888"/><rect x="693.99" y="82.40" width="0.6" height="0.6" fill="#777"/><path d="M343.2 78.60000000000001 H346.40000000000003 V80.0 L344.8 81.60000000000001 L343.2 80.0 Z" fill="#f4f7f6" stroke="#8a8a8a" stroke-width="0.5"/><path d="M343.2 87.4 H346.40000000000003 V84.4 L344.8 83.0 L343.2 84.4 Z" fill="#f4f7f6" stroke="#8a8a8a" stroke-width="0.5"/><path d="M649.6 86.4 H652.8000000000001 V84.4 L651.2 83.0 L649.6 84.4 Z" fill="#f4f7f6" stroke="#8a8a8a" stroke-width="0.5"/></svg>
<span class="t" id="t83" style="left:140.40px;top:171.00px;font-size:16.5px;line-height:16.5px;color:#3d3d3d;transform:scaleX(0.9684);">Programación Didáctica para la clase de</span>
<span class="t" id="t84" style="left:140.40px;top:195.00px;font-size:16.5px;line-height:16.5px;color:#3d3d3d;transform:scaleX(0.9739);">IPE II (Itinerario para la Empleabilidad) del</span>
<span class="t" id="t85" style="left:140.40px;top:218.00px;font-size:16.5px;line-height:16.5px;color:#3d3d3d;transform:scaleX(0.9785);">Ciclo Formativo de Grado Superior de</span>
<span class="t" id="t86" style="left:140.40px;top:241.00px;font-size:16.5px;line-height:16.5px;color:#3d3d3d;letter-spacing:0.063px;">Mecatrónica Industrial</span>
<span class="t" id="t87" style="left:140.20px;top:296.00px;font-size:10.1px;line-height:10.1px;color:#4a69a8;letter-spacing:-0.089px;">Comunidad Autónoma:</span>
<span class="t" id="t88" style="left:283.80px;top:296.00px;font-size:10.1px;line-height:10.1px;color:#4a69a8;transform:scaleX(0.9442);">Andalucía</span>
<span class="t" id="t89" style="left:140.20px;top:316.00px;font-size:10.1px;line-height:10.1px;color:#4a69a8;transform:scaleX(0.9485);">Ley educativa aplicable:</span>
<span class="t" id="t90" style="left:283.80px;top:316.00px;font-size:10.1px;line-height:10.1px;color:#34548f;font-weight:700;transform:scaleX(0.8475);">LOMLOE</span>
<span class="t" id="t91" style="left:140.20px;top:377.00px;font-size:6.6px;line-height:6.6px;color:#141414;transform:scaleX(0.9705);">Autor: XXXXX</span>
<span class="t" id="t92" style="left:550.60px;top:162.00px;font-size:6.6px;line-height:6.6px;color:#141414;font-weight:700;transform:scaleX(0.9124);">ÍNDICE</span>
<span class="t" id="t93" style="left:550.60px;top:177.00px;font-size:6.6px;line-height:6.6px;color:#141414;font-weight:700;transform:scaleX(0.9552);">1. INTRODUCCIÓN</span>
<div class="a" style="left:606.90px;top:177.00px;width:219.10px;height:7.6px;overflow:hidden;font-size:6.6px;line-height:6.6px;color:#2a2a2a;font-weight:700;white-space:nowrap;letter-spacing:0.02px;">....................................................................................................................................................................................................................................................................</div>
<span class="t" id="t94" style="left:828.33px;top:177.00px;font-size:6.6px;line-height:6.6px;color:#141414;">3</span>
<span class="t" id="t95" style="left:557.50px;top:187.00px;font-size:6.6px;line-height:6.6px;color:#141414;letter-spacing:0.028px;">1.1. Contextualización</span>
<div class="a" style="left:623.30px;top:187.00px;width:206.70px;height:7.6px;overflow:hidden;font-size:6.6px;line-height:6.6px;color:#2a2a2a;font-weight:700;white-space:nowrap;letter-spacing:0.02px;">....................................................................................................................................................................................................................................................................</div>
<span class="t" id="t96" style="left:831.93px;top:187.00px;font-size:6.6px;line-height:6.6px;color:#141414;">3</span>
<span class="t" id="t97" style="left:557.50px;top:197.00px;font-size:6.6px;line-height:6.6px;color:#141414;letter-spacing:0.021px;">1.2. Características del curso y del alumnado</span>
<div class="a" style="left:690.70px;top:197.00px;width:137.30px;height:7.6px;overflow:hidden;font-size:6.6px;line-height:6.6px;color:#2a2a2a;font-weight:700;white-space:nowrap;letter-spacing:0.02px;">....................................................................................................................................................................................................................................................................</div>
<span class="t" id="t98" style="left:829.33px;top:197.00px;font-size:6.6px;line-height:6.6px;color:#141414;">4</span>
<span class="t" id="t99" style="left:557.50px;top:206.00px;font-size:6.6px;line-height:6.6px;color:#141414;transform:scaleX(1.0252);">1.3. Marco legislativo</span>
<div class="a" style="left:621.30px;top:206.00px;width:207.70px;height:7.6px;overflow:hidden;font-size:6.6px;line-height:6.6px;color:#2a2a2a;font-weight:700;white-space:nowrap;letter-spacing:0.02px;">....................................................................................................................................................................................................................................................................</div>
<span class="t" id="t100" style="left:831.33px;top:206.00px;font-size:6.6px;line-height:6.6px;color:#141414;">5</span>
<span class="t" id="t101" style="left:550.60px;top:222.00px;font-size:6.6px;line-height:6.6px;color:#141414;font-weight:700;transform:scaleX(0.8870);">2. OBJETIVOS GENERALES</span>
<div class="a" style="left:628.90px;top:222.00px;width:197.10px;height:7.6px;overflow:hidden;font-size:6.6px;line-height:6.6px;color:#2a2a2a;font-weight:700;white-space:nowrap;letter-spacing:0.02px;">....................................................................................................................................................................................................................................................................</div>
<span class="t" id="t102" style="left:827.33px;top:222.00px;font-size:6.6px;line-height:6.6px;color:#141414;">7</span>
<span class="t" id="t103" style="left:550.60px;top:237.00px;font-size:6.6px;line-height:6.6px;color:#141414;font-weight:700;transform:scaleX(0.8975);">3. COMPETENCIAS CLAVE Y ESPECÍFICAS</span>
<div class="a" style="left:672.90px;top:237.00px;width:144.10px;height:7.6px;overflow:hidden;font-size:6.6px;line-height:6.6px;color:#2a2a2a;font-weight:700;white-space:nowrap;letter-spacing:0.02px;">....................................................................................................................................................................................................................................................................</div>
<span class="t" id="t104" style="left:819.33px;top:237.00px;font-size:6.6px;line-height:6.6px;color:#141414;">9</span>
<span class="t" id="t105" style="left:557.50px;top:246.00px;font-size:6.6px;line-height:6.6px;color:#141414;letter-spacing:-0.013px;">3.1. Competencias clave</span>
<div class="a" style="left:629.70px;top:246.00px;width:200.30px;height:7.6px;overflow:hidden;font-size:6.6px;line-height:6.6px;color:#2a2a2a;font-weight:700;white-space:nowrap;letter-spacing:0.02px;">....................................................................................................................................................................................................................................................................</div>
<span class="t" id="t106" style="left:832.33px;top:246.00px;font-size:6.6px;line-height:6.6px;color:#141414;">9</span>
<span class="t" id="t107" style="left:557.50px;top:256.00px;font-size:6.6px;line-height:6.6px;color:#141414;letter-spacing:-0.031px;">3.2. Competencias específicas</span>
<div class="a" style="left:646.70px;top:256.00px;width:178.30px;height:7.6px;overflow:hidden;font-size:6.6px;line-height:6.6px;color:#2a2a2a;font-weight:700;white-space:nowrap;letter-spacing:0.02px;">....................................................................................................................................................................................................................................................................</div>
<span class="t" id="t108" style="left:827.06px;top:256.00px;font-size:6.6px;line-height:6.6px;color:#141414;">10</span>
<span class="t" id="t109" style="left:550.60px;top:271.00px;font-size:6.6px;line-height:6.6px;color:#141414;font-weight:700;transform:scaleX(0.9020);">4. SABERES BÁSICOS (CONTENIDOS)</span>
<div class="a" style="left:660.30px;top:271.00px;width:159.70px;height:7.6px;overflow:hidden;font-size:6.6px;line-height:6.6px;color:#2a2a2a;font-weight:700;white-space:nowrap;letter-spacing:0.02px;">....................................................................................................................................................................................................................................................................</div>
<span class="t" id="t110" style="left:821.66px;top:271.00px;font-size:6.6px;line-height:6.6px;color:#141414;">12</span>
<span class="t" id="t111" style="left:557.50px;top:281.00px;font-size:6.6px;line-height:6.6px;color:#141414;letter-spacing:0.008px;">4.1. Concreción y secuenciación</span>
<div class="a" style="left:653.00px;top:281.00px;width:172.00px;height:7.6px;overflow:hidden;font-size:6.6px;line-height:6.6px;color:#2a2a2a;font-weight:700;white-space:nowrap;letter-spacing:0.02px;">....................................................................................................................................................................................................................................................................</div>
<span class="t" id="t112" style="left:827.06px;top:281.00px;font-size:6.6px;line-height:6.6px;color:#141414;">12</span>
<span class="t" id="t113" style="left:557.50px;top:291.00px;font-size:6.6px;line-height:6.6px;color:#141414;letter-spacing:0.050px;">4.2. Temporalización general</span>
<div class="a" style="left:643.40px;top:291.00px;width:181.60px;height:7.6px;overflow:hidden;font-size:6.6px;line-height:6.6px;color:#2a2a2a;font-weight:700;white-space:nowrap;letter-spacing:0.02px;">....................................................................................................................................................................................................................................................................</div>
<span class="t" id="t114" style="left:826.66px;top:291.00px;font-size:6.6px;line-height:6.6px;color:#141414;">14</span>
<span class="t" id="t115" style="left:550.60px;top:306.00px;font-size:6.6px;line-height:6.6px;color:#141414;font-weight:700;transform:scaleX(0.9626);">5. METODOLOGÍA</span>
<div class="a" style="left:605.80px;top:306.00px;width:219.20px;height:7.6px;overflow:hidden;font-size:6.6px;line-height:6.6px;color:#2a2a2a;font-weight:700;white-space:nowrap;letter-spacing:0.02px;">....................................................................................................................................................................................................................................................................</div>
<span class="t" id="t116" style="left:826.66px;top:306.00px;font-size:6.6px;line-height:6.6px;color:#141414;">16</span>
<span class="t" id="t117" style="left:557.50px;top:316.00px;font-size:6.6px;line-height:6.6px;color:#141414;transform:scaleX(1.0307);">5.1. Principios metodológicos</span>
<div class="a" style="left:646.20px;top:316.00px;width:177.80px;height:7.6px;overflow:hidden;font-size:6.6px;line-height:6.6px;color:#2a2a2a;font-weight:700;white-space:nowrap;letter-spacing:0.02px;">....................................................................................................................................................................................................................................................................</div>
<span class="t" id="t118" style="left:825.66px;top:316.00px;font-size:6.6px;line-height:6.6px;color:#141414;">16</span>
<span class="t" id="t119" style="left:557.50px;top:326.00px;font-size:6.6px;line-height:6.6px;color:#141414;letter-spacing:-0.006px;">5.2. Recursos didácticos</span>
<div class="a" style="left:629.50px;top:326.00px;width:196.50px;height:7.6px;overflow:hidden;font-size:6.6px;line-height:6.6px;color:#2a2a2a;font-weight:700;white-space:nowrap;letter-spacing:0.02px;">....................................................................................................................................................................................................................................................................</div>
<span class="t" id="t120" style="left:827.66px;top:326.00px;font-size:6.6px;line-height:6.6px;color:#141414;">18</span>
<span class="t" id="t121" style="left:557.50px;top:335.00px;font-size:6.6px;line-height:6.6px;color:#141414;letter-spacing:0.011px;">5.3. Atención a la diversidad y NEE</span>
<div class="a" style="left:661.20px;top:335.00px;width:160.80px;height:7.6px;overflow:hidden;font-size:6.6px;line-height:6.6px;color:#2a2a2a;font-weight:700;white-space:nowrap;letter-spacing:0.02px;">....................................................................................................................................................................................................................................................................</div>
<span class="t" id="t122" style="left:823.66px;top:335.00px;font-size:6.6px;line-height:6.6px;color:#141414;">20</span>
<span class="t" id="t123" style="left:550.60px;top:351.00px;font-size:6.6px;line-height:6.6px;color:#141414;font-weight:700;transform:scaleX(0.9358);">6. EVALUACIÓN</span>
<div class="a" style="left:598.10px;top:351.00px;width:228.90px;height:7.6px;overflow:hidden;font-size:6.6px;line-height:6.6px;color:#2a2a2a;font-weight:700;white-space:nowrap;letter-spacing:0.02px;">....................................................................................................................................................................................................................................................................</div>
<span class="t" id="t124" style="left:828.66px;top:351.00px;font-size:6.6px;line-height:6.6px;color:#141414;">23</span>
<span class="t" id="t125" style="left:557.50px;top:360.00px;font-size:6.6px;line-height:6.6px;color:#141414;letter-spacing:0.028px;">6.1. Criterios de evaluación</span>
<div class="a" style="left:638.50px;top:360.00px;width:188.50px;height:7.6px;overflow:hidden;font-size:6.6px;line-height:6.6px;color:#2a2a2a;font-weight:700;white-space:nowrap;letter-spacing:0.02px;">....................................................................................................................................................................................................................................................................</div>
<span class="t" id="t126" style="left:828.66px;top:360.00px;font-size:6.6px;line-height:6.6px;color:#141414;">23</span>
<span class="t" id="t127" style="left:557.50px;top:370.00px;font-size:6.6px;line-height:6.6px;color:#141414;transform:scaleX(1.0446);">6.2. Instrumentos y procedimientos</span>
<div class="a" style="left:665.00px;top:370.00px;width:160.00px;height:7.6px;overflow:hidden;font-size:6.6px;line-height:6.6px;color:#2a2a2a;font-weight:700;white-space:nowrap;letter-spacing:0.02px;">....................................................................................................................................................................................................................................................................</div>
<span class="t" id="t128" style="left:827.26px;top:370.00px;font-size:6.6px;line-height:6.6px;color:#141414;">25</span>
<span class="t" id="t129" style="left:557.50px;top:380.00px;font-size:6.6px;line-height:6.6px;color:#141414;letter-spacing:0.060px;">6.3. Recuperación y promoción</span>
<div class="a" style="left:650.80px;top:380.00px;width:174.20px;height:7.6px;overflow:hidden;font-size:6.6px;line-height:6.6px;color:#2a2a2a;font-weight:700;white-space:nowrap;letter-spacing:0.02px;">....................................................................................................................................................................................................................................................................</div>
<span class="t" id="t130" style="left:826.66px;top:380.00px;font-size:6.6px;line-height:6.6px;color:#141414;">27</span>
<span class="t" id="t131" style="left:550.60px;top:395.00px;font-size:6.6px;line-height:6.6px;color:#141414;font-weight:700;transform:scaleX(0.9268);">7. UNIDADES DIDÁCTICAS</span>
<div class="a" style="left:629.00px;top:395.00px;width:193.00px;height:7.6px;overflow:hidden;font-size:6.6px;line-height:6.6px;color:#2a2a2a;font-weight:700;white-space:nowrap;letter-spacing:0.02px;">....................................................................................................................................................................................................................................................................</div>
<span class="t" id="t132" style="left:824.26px;top:395.00px;font-size:6.6px;line-height:6.6px;color:#141414;">29</span>
<span class="t" id="t133" style="left:557.20px;top:405.00px;font-size:6.6px;line-height:6.6px;color:#141414;font-weight:700;letter-spacing:-0.048px;">UD 1. [Título UD 1: ej. Introducción al tema básico]</span>
<div class="a" style="left:713.30px;top:405.00px;width:108.70px;height:7.6px;overflow:hidden;font-size:6.6px;line-height:6.6px;color:#2a2a2a;font-weight:700;white-space:nowrap;letter-spacing:0.02px;">....................................................................................................................................................................................................................................................................</div>
<span class="t" id="t134" style="left:824.26px;top:405.00px;font-size:6.6px;line-height:6.6px;color:#141414;">29</span>
<span class="t" id="t135" style="left:564.20px;top:415.00px;font-size:6.6px;line-height:6.6px;color:#141414;transform:scaleX(1.0228);">7.1.1. Objetivos y competencias</span>
<div class="a" style="left:660.10px;top:415.00px;width:165.90px;height:7.6px;overflow:hidden;font-size:6.6px;line-height:6.6px;color:#2a2a2a;font-weight:700;white-space:nowrap;letter-spacing:0.02px;">....................................................................................................................................................................................................................................................................</div>
<span class="t" id="t136" style="left:828.66px;top:415.00px;font-size:6.6px;line-height:6.6px;color:#141414;">29</span>
<span class="t" id="t137" style="left:564.20px;top:424.00px;font-size:6.6px;line-height:6.6px;color:#141414;transform:scaleX(0.9735);">7.1.2. Saberes básicos</span>
<div class="a" style="left:629.80px;top:424.00px;width:193.20px;height:7.6px;overflow:hidden;font-size:6.6px;line-height:6.6px;color:#2a2a2a;font-weight:700;white-space:nowrap;letter-spacing:0.02px;">....................................................................................................................................................................................................................................................................</div>
<span class="t" id="t138" style="left:825.06px;top:424.00px;font-size:6.6px;line-height:6.6px;color:#141414;">30</span>
<span class="t" id="t139" style="left:564.20px;top:434.00px;font-size:6.6px;line-height:6.6px;color:#141414;transform:scaleX(1.0239);">7.1.3. Actividades y situaciones de aprendizaje</span>
<div class="a" style="left:704.50px;top:434.00px;width:124.50px;height:7.6px;overflow:hidden;font-size:6.6px;line-height:6.6px;color:#2a2a2a;font-weight:700;white-space:nowrap;letter-spacing:0.02px;">....................................................................................................................................................................................................................................................................</div>
<span class="t" id="t140" style="left:831.06px;top:434.00px;font-size:6.6px;line-height:6.6px;color:#141414;">31</span>
<span class="t" id="t141" style="left:564.20px;top:444.00px;font-size:6.6px;line-height:6.6px;color:#141414;transform:scaleX(1.0278);">7.1.4. Evaluación</span>
<div class="a" style="left:616.50px;top:444.00px;width:206.50px;height:7.6px;overflow:hidden;font-size:6.6px;line-height:6.6px;color:#2a2a2a;font-weight:700;white-space:nowrap;letter-spacing:0.02px;">....................................................................................................................................................................................................................................................................</div>
<span class="t" id="t142" style="left:825.06px;top:444.00px;font-size:6.6px;line-height:6.6px;color:#141414;">33</span>
<span class="t" id="t143" style="left:564.20px;top:454.00px;font-size:6.6px;line-height:6.6px;color:#141414;transform:scaleX(1.0234);">7.1.5. Temporalización</span>
<div class="a" style="left:631.90px;top:454.00px;width:191.10px;height:7.6px;overflow:hidden;font-size:6.6px;line-height:6.6px;color:#2a2a2a;font-weight:700;white-space:nowrap;letter-spacing:0.02px;">....................................................................................................................................................................................................................................................................</div>
<span class="t" id="t144" style="left:824.66px;top:454.00px;font-size:6.6px;line-height:6.6px;color:#141414;">34</span>
<span class="t" id="t145" style="left:557.20px;top:469.00px;font-size:6.6px;line-height:6.6px;color:#141414;font-weight:700;letter-spacing:-0.021px;">UD 2. [Título UD 2]</span>
<div class="a" style="left:615.00px;top:469.00px;width:204.00px;height:7.6px;overflow:hidden;font-size:6.6px;line-height:6.6px;color:#2a2a2a;font-weight:700;white-space:nowrap;letter-spacing:0.02px;">....................................................................................................................................................................................................................................................................</div>
<span class="t" id="t146" style="left:821.26px;top:469.00px;font-size:6.6px;line-height:6.6px;color:#141414;">35</span>
<span class="t" id="t147" style="left:550.60px;top:479.00px;font-size:6.6px;line-height:6.6px;color:#141414;font-style:italic;transform:scaleX(1.0252);">(Repite estructura para UD 3 a UD 12, mínimo requerido)</span>
<span class="t" id="t148" style="left:550.60px;top:494.00px;font-size:6.6px;line-height:6.6px;color:#141414;font-weight:700;transform:scaleX(0.8998);">8. MATERIALES Y RECURSOS</span>
<div class="a" style="left:636.30px;top:494.00px;width:185.50px;height:7.6px;overflow:hidden;font-size:6.6px;line-height:6.6px;color:#2a2a2a;font-weight:700;white-space:nowrap;letter-spacing:0.02px;">....................................................................................................................................................................................................................................................................</div>
<span class="t" id="t149" style="left:823.96px;top:494.00px;font-size:6.6px;line-height:6.6px;color:#141414;">50</span>
<span class="t" id="t150" style="left:550.60px;top:509.00px;font-size:6.6px;line-height:6.6px;color:#141414;font-weight:700;transform:scaleX(0.9308);">9. BIBLIOGRAFÍA Y ANEXOS</span>
<div class="a" style="left:634.80px;top:509.00px;width:188.70px;height:7.6px;overflow:hidden;font-size:6.6px;line-height:6.6px;color:#2a2a2a;font-weight:700;white-space:nowrap;letter-spacing:0.02px;">....................................................................................................................................................................................................................................................................</div>
<span class="t" id="t151" style="left:825.36px;top:509.00px;font-size:6.6px;line-height:6.6px;color:#141414;">52</span>
<span class="t" id="t152" style="left:557.50px;top:519.00px;font-size:6.6px;line-height:6.6px;color:#141414;transform:scaleX(1.0247);">9.1. Bibliografía normativa</span>
<div class="a" style="left:636.30px;top:519.00px;width:189.70px;height:7.6px;overflow:hidden;font-size:6.6px;line-height:6.6px;color:#2a2a2a;font-weight:700;white-space:nowrap;letter-spacing:0.02px;">....................................................................................................................................................................................................................................................................</div>
<span class="t" id="t153" style="left:827.56px;top:519.00px;font-size:6.6px;line-height:6.6px;color:#141414;">52</span>
<span class="t" id="t154" style="left:557.50px;top:528.00px;font-size:6.6px;line-height:6.6px;color:#141414;transform:scaleX(1.0448);">9.2. Bibliografía complementaria</span>
<div class="a" style="left:656.60px;top:528.00px;width:169.40px;height:7.6px;overflow:hidden;font-size:6.6px;line-height:6.6px;color:#2a2a2a;font-weight:700;white-space:nowrap;letter-spacing:0.02px;">....................................................................................................................................................................................................................................................................</div>
<span class="t" id="t155" style="left:827.56px;top:528.00px;font-size:6.6px;line-height:6.6px;color:#141414;">53</span>
<span class="t" id="t156" style="left:557.50px;top:538.00px;font-size:6.6px;line-height:6.6px;color:#141414;transform:scaleX(0.9000);">9.3. Anexos (rúbricas, plantillas, RUMOS)</span>
<div class="a" style="left:667.30px;top:538.00px;width:156.70px;height:7.6px;overflow:hidden;font-size:6.6px;line-height:6.6px;color:#2a2a2a;font-weight:700;white-space:nowrap;letter-spacing:0.02px;">....................................................................................................................................................................................................................................................................</div>
<span class="t" id="t157" style="left:824.66px;top:538.00px;font-size:6.6px;line-height:6.6px;color:#141414;">54</span>
<svg class="f" width="994" height="550" viewBox="0 0 994 550"><rect x="0" y="0" width="994" height="10" rx="0" fill="#000"/></svg>
<svg class="f" width="994" height="550" viewBox="0 0 994 550"><rect x="0" y="539.6" width="994" height="10.4" rx="0" fill="#000"/></svg>
</div>
</body></html>
